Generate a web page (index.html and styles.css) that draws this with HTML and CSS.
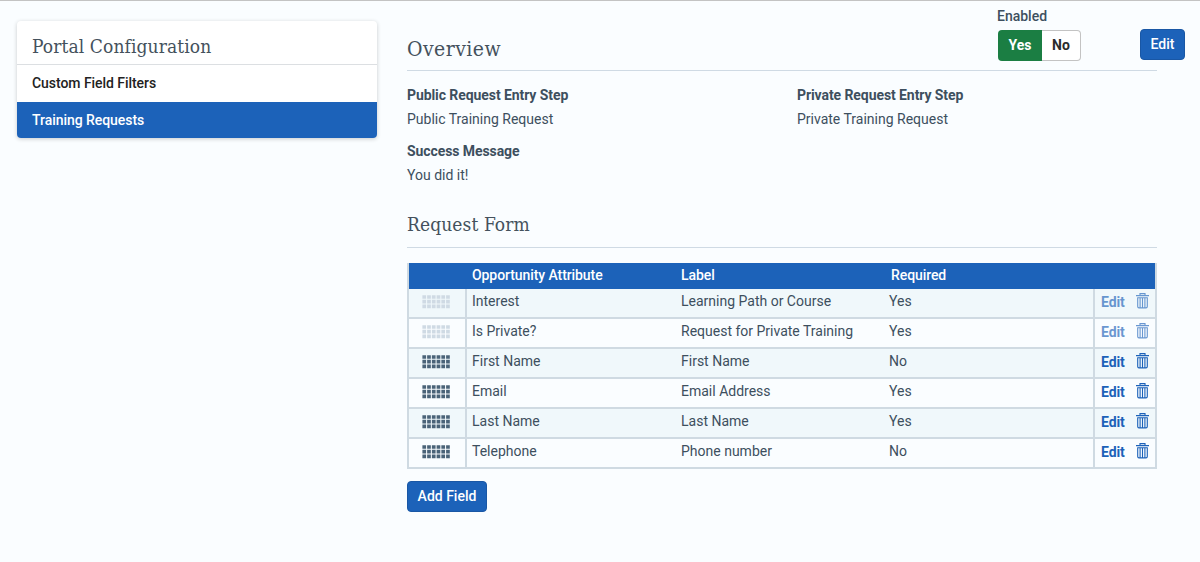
FILE: index.html
```html
<!DOCTYPE html>
<html lang="en">
<head>
    <meta charset="UTF-8">
    <meta name="viewport" content="width=device-width, initial-scale=1.0">
    <title>Portal Configuration</title>
    <link rel="stylesheet" href="styles.css">
</head>
<body>
    <svg class="sprite">
        <symbol id="grip" viewBox="0 0 28 14">
            <path d="M0.4 2H28M0.4 6.7H28M0.4 11.4H28" fill="none" stroke="currentColor" stroke-width="3.7" stroke-dasharray="3.7 1.04"/>
        </symbol>
        <symbol id="trash" viewBox="0 0 13 16">
            <path d="M0 2.6H13M4 2.6V0.6H9V2.6M1.7 5V13.6Q1.7 14.9 3 14.9H10Q11.3 14.9 11.3 13.6V5M1.2 4.8H11.8M4.1 5V14.5M6.5 5V14.5M8.9 5V14.5" fill="none" stroke="currentColor" stroke-width="1.1"/>
        </symbol>
    </svg>
    <div class="page">
        <nav class="card">
            <h3>Portal Configuration</h3>
            <a>Custom Field Filters</a>
            <a class="active">Training Requests</a>
        </nav>
        <main>
            <header class="overview">
                <h2>Overview</h2>
                <div class="enabled">
                    <label>Enabled</label>
                    <div class="toggle"><span class="on">Yes</span><span class="off">No</span></div>
                </div>
                <button>Edit</button>
            </header>
            <dl>
                <div>
                    <dt>Public Request Entry Step</dt>
                    <dd>Public Training Request</dd>
                </div>
                <div>
                    <dt>Private Request Entry Step</dt>
                    <dd>Private Training Request</dd>
                </div>
                <div>
                    <dt>Success Message</dt>
                    <dd>You did it!</dd>
                </div>
            </dl>
            <h2 class="form-title">Request Form</h2>
            <table>
                <thead>
                    <tr>
                        <th class="handle"></th>
                        <th class="attribute">Opportunity Attribute</th>
                        <th class="name">Label</th>
                        <th class="required">Required</th>
                        <th class="actions"></th>
                    </tr>
                </thead>
                <tbody>
                    <tr class="locked">
                        <td class="handle"><svg><use href="#grip"/></svg></td>
                        <td>Interest</td>
                        <td>Learning Path or Course</td>
                        <td>Yes</td>
                        <td class="actions"><div><a>Edit</a><svg><use href="#trash"/></svg></div></td>
                    </tr>
                    <tr class="locked">
                        <td class="handle"><svg><use href="#grip"/></svg></td>
                        <td>Is Private?</td>
                        <td>Request for Private Training</td>
                        <td>Yes</td>
                        <td class="actions"><div><a>Edit</a><svg><use href="#trash"/></svg></div></td>
                    </tr>
                    <tr>
                        <td class="handle"><svg><use href="#grip"/></svg></td>
                        <td>First Name</td>
                        <td>First Name</td>
                        <td>No</td>
                        <td class="actions"><div><a>Edit</a><svg><use href="#trash"/></svg></div></td>
                    </tr>
                    <tr>
                        <td class="handle"><svg><use href="#grip"/></svg></td>
                        <td>Email</td>
                        <td>Email Address</td>
                        <td>Yes</td>
                        <td class="actions"><div><a>Edit</a><svg><use href="#trash"/></svg></div></td>
                    </tr>
                    <tr>
                        <td class="handle"><svg><use href="#grip"/></svg></td>
                        <td>Last Name</td>
                        <td>Last Name</td>
                        <td>Yes</td>
                        <td class="actions"><div><a>Edit</a><svg><use href="#trash"/></svg></div></td>
                    </tr>
                    <tr>
                        <td class="handle"><svg><use href="#grip"/></svg></td>
                        <td>Telephone</td>
                        <td>Phone number</td>
                        <td>No</td>
                        <td class="actions"><div><a>Edit</a><svg><use href="#trash"/></svg></div></td>
                    </tr>
                </tbody>
            </table>
            <button class="add">Add Field</button>
        </main>
    </div>
</body>
</html>
```
FILE: styles.css
```css
* {
    box-sizing: border-box;
}
body {
    margin: 0;
    background-color: #fafdff;
    border-top: 1px solid #c3c3c3;
    color: #3d4f5e;
    font-family: Roboto, sans-serif;
    font-size: 14px;
    line-height: 20px;
}
h2, h3 {
    margin: 0;
    color: #44515c;
    font-family: "Roboto Slab", "DejaVu Serif Condensed", "DejaVu Serif", serif;
    font-size: 19px;
    font-weight: 300;
    letter-spacing: 0.1px;
}
.sprite {
    display: none;
}
.page {
    display: flex;
    align-items: flex-start;
    gap: 30px;
    padding-left: 17px;
}
.card {
    width: 360px;
    margin-top: 20px;
    background-color: #fff;
    border-radius: 4px;
    box-shadow: 0 1px 4px rgba(0, 0, 0, 0.2);
    overflow: hidden;
}
.card h3 {
    height: 44px;
    padding: 15px 15px 0;
    border-bottom: 1px solid #dcdfe2;
}
.card a {
    display: block;
    height: 37px;
    padding: 8px 15px;
    color: #222;
    font-weight: 500;
    letter-spacing: -0.05px;
}
.card a.active {
    height: 36px;
    background-color: #1c62b9;
    color: #fff;
}
main {
    width: 750px;
}
.overview {
    display: flex;
    height: 70px;
    border-bottom: 1px solid #cfdae4;
}
.overview h2 {
    flex: 1;
    padding-top: 38px;
    font-size: 21px;
    letter-spacing: 0.45px;
}
.enabled {
    width: 84px;
    margin-right: 59px;
    padding-top: 5px;
}
.enabled label {
    display: block;
    height: 24px;
    font-weight: 500;
}
.toggle {
    display: flex;
    margin-left: 1px;
    height: 31px;
    line-height: 31px;
    text-align: center;
    font-weight: 700;
}
.toggle .on {
    width: 44px;
    border-radius: 4px 0 0 4px;
    background-color: #1b7e43;
    color: #fff;
}
.toggle .off {
    width: 39px;
    border: 1px solid #c3c3c3;
    border-left: 0;
    border-radius: 0 4px 4px 0;
    background-color: #fff;
    color: #2b2b2b;
    line-height: 29px;
}
button {
    width: 45px;
    height: 31px;
    padding: 0;
    border: 1px solid #1957a5;
    border-radius: 4px;
    background-color: #1c62b9;
    color: #fff;
    font: 500 14px/29px Roboto, sans-serif;
}
.overview button {
    margin: 28px -28px 0 0;
}
dl {
    display: grid;
    grid-template-columns: 390px 1fr;
    row-gap: 8px;
    margin: 14px 0 0;
}
dt {
    height: 24px;
    font-weight: 700;
    letter-spacing: -0.08px;
}
dt, dd {
    margin: 0;
    line-height: 20px;
}
dd {
    height: 24px;
}
.form-title {
    height: 59px;
    padding-top: 25px;
    margin-bottom: 15px;
    border-bottom: 1px solid #cfdae4;
}
table {
    width: 750px;
    table-layout: fixed;
    border-collapse: separate;
    border-spacing: 0;
    border: solid #cfdae2;
    border-width: 0 2px;
}
th {
    height: 26px;
    padding: 0 5px 2px;
    background-color: #1c62b9;
    color: #fff;
    font-weight: 500;
    letter-spacing: -0.08px;
    text-align: left;
}
td {
    height: 30px;
    padding: 0 5px 4px;
    border-bottom: 2px solid #cfdae2;
}
tbody tr:nth-child(odd) {
    background-color: #f0f8fb;
}
.handle {
    width: 58px;
}
.attribute {
    width: 209px;
}
.name {
    width: 208px;
}
th.required {
    padding-left: 7px;
}
.actions {
    width: 62px;
}
td.handle {
    border-right: 2px solid #cfdae2;
    padding: 0 0 2px 13px;
    color: #4a6378;
}
.handle svg {
    display: block;
    width: 28px;
    height: 14px;
}
td.actions {
    padding: 0 0 0 6px;
    border-left: 2px solid #cfdae2;
    color: #1c62b9;
    font-weight: 700;
}
.actions div {
    display: flex;
    align-items: flex-start;
    height: 24px;
    padding-top: 1px;
}
.actions a {
    width: 35px;
    letter-spacing: -0.08px;
}
.actions svg {
    width: 13px;
    height: 16px;
    margin-top: 1px;
}
.locked .handle {
    color: #cfdae4;
}
.locked .actions div {
    opacity: 0.65;
}
.add {
    display: block;
    width: 80px;
    margin-top: 12px;
}
```
